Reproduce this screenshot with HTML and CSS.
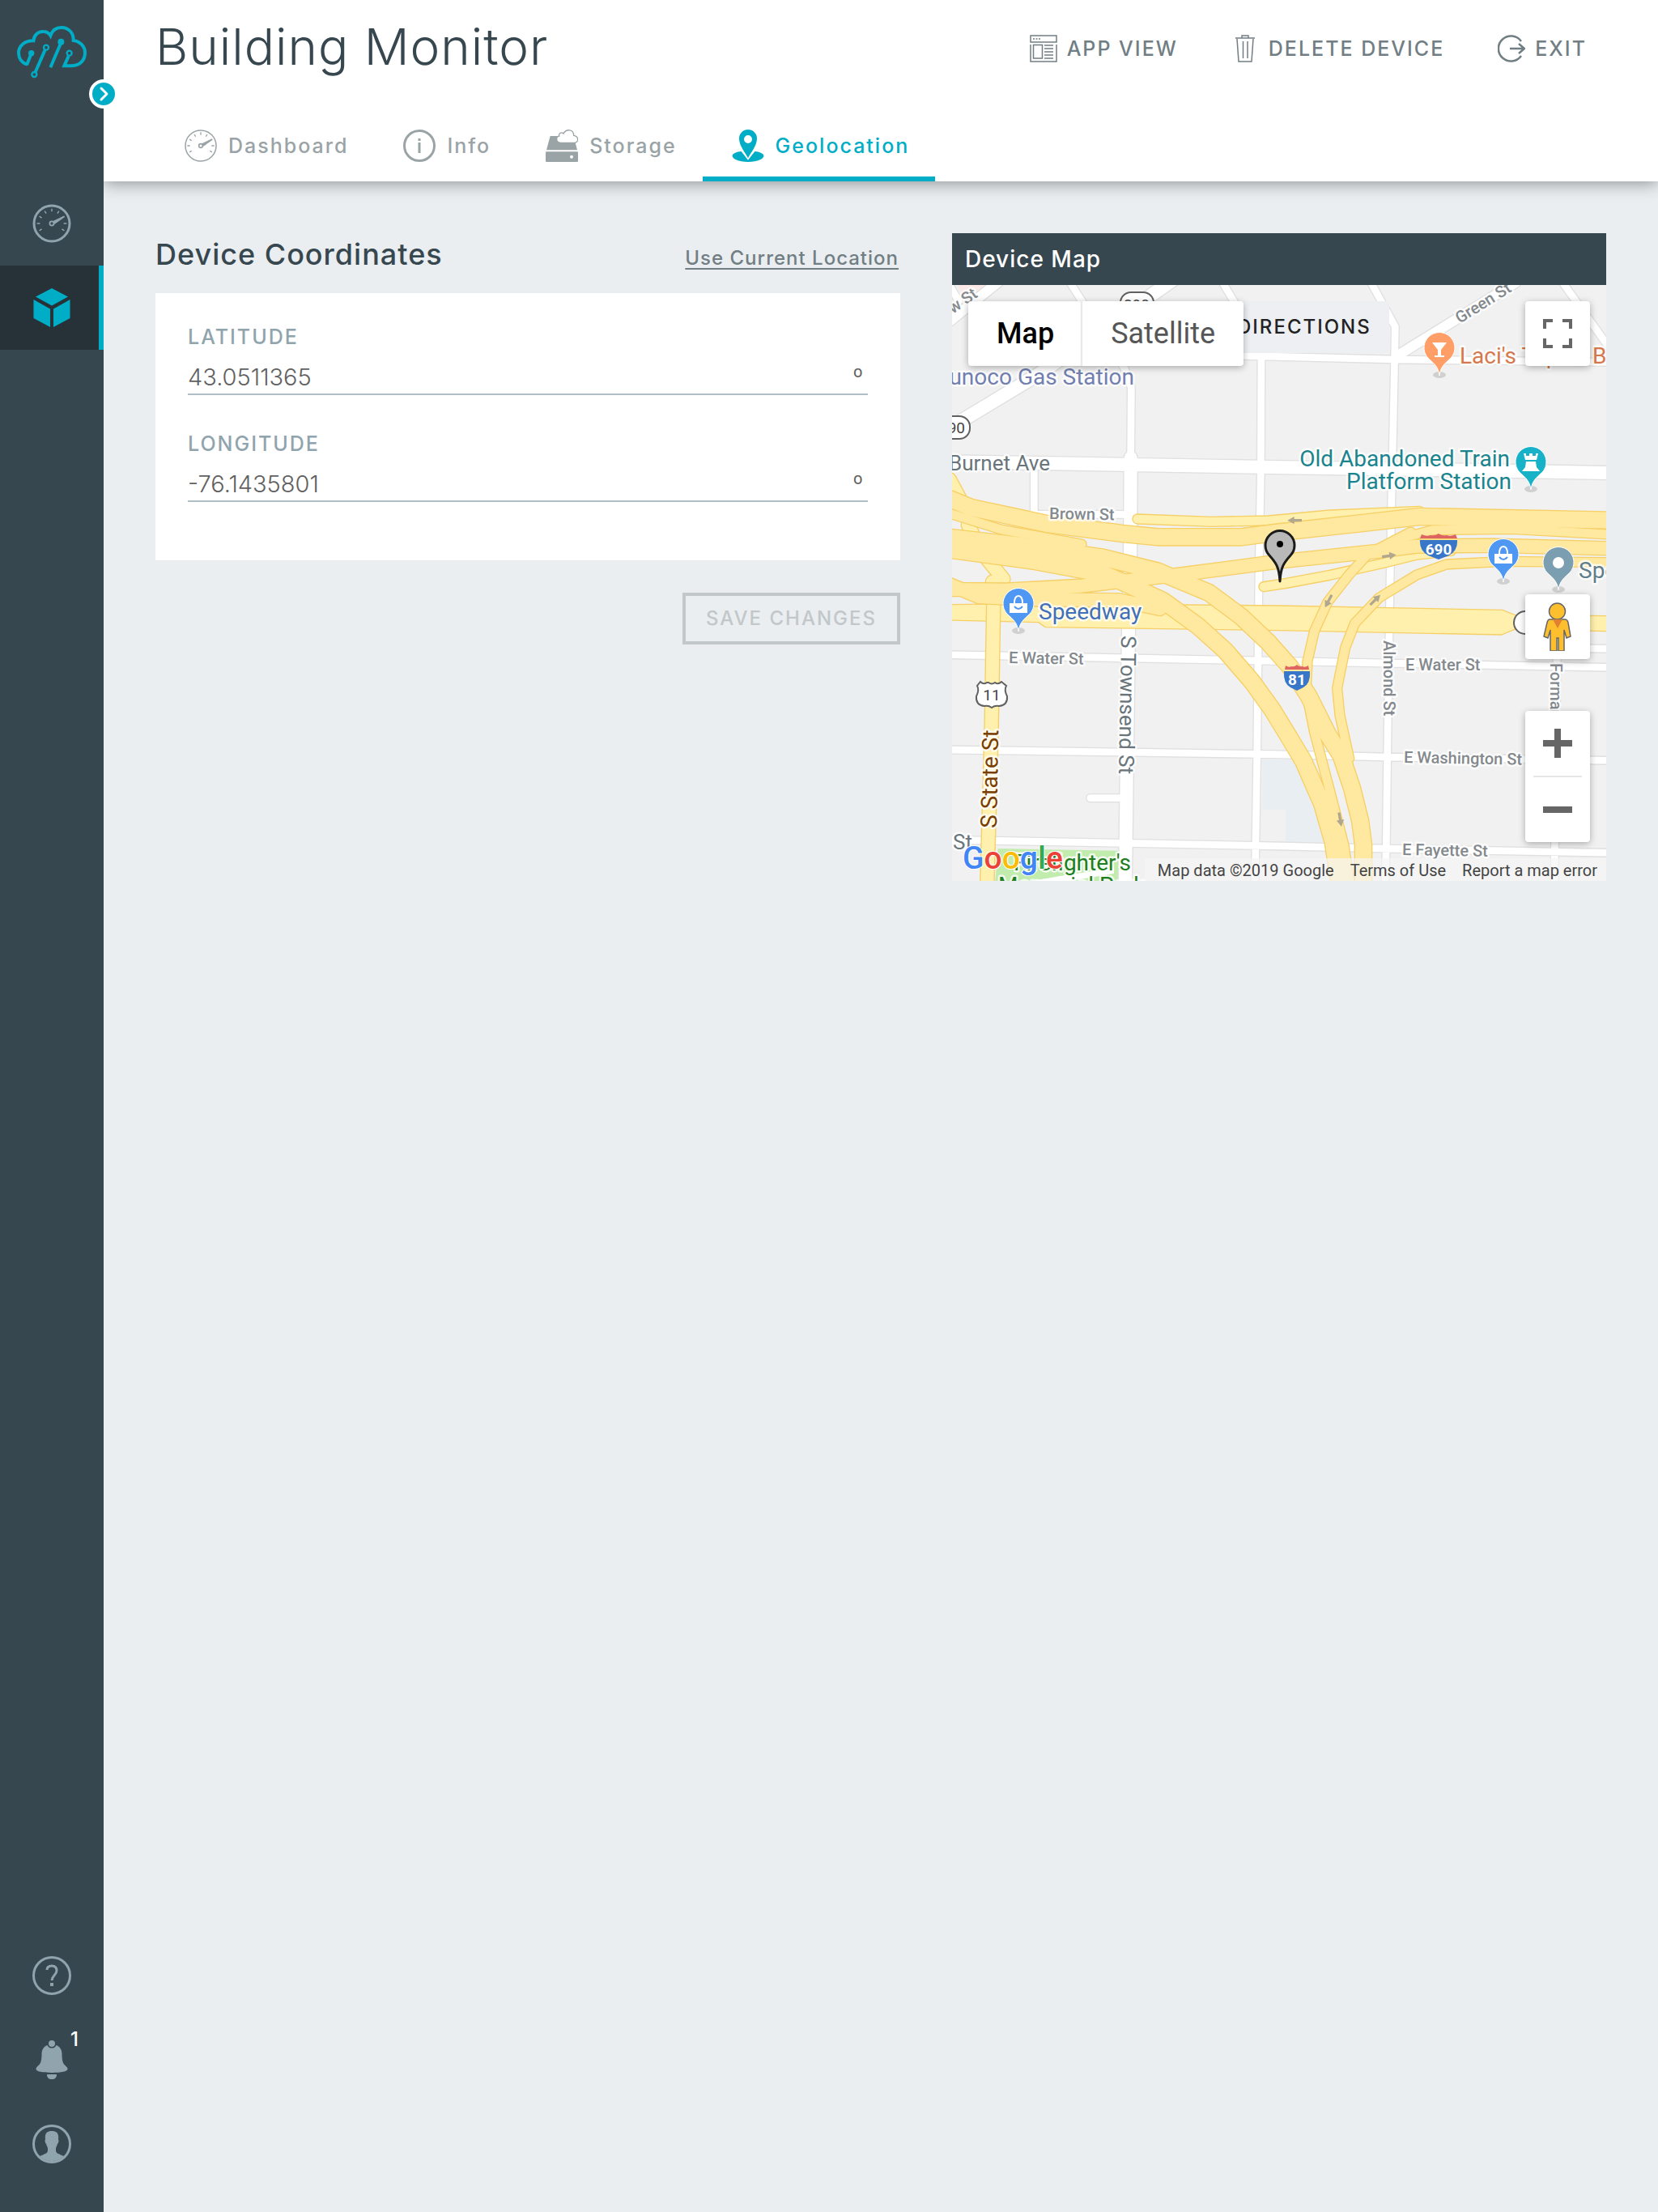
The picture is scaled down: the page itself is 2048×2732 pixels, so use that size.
FILE: index.html
```html
<!DOCTYPE html>
<html lang="en">
<head>
<meta charset="utf-8">
<meta name="viewport" content="width=device-width, initial-scale=1">
<title>Building Monitor</title>
<link rel="stylesheet" href="styles.css">
</head>
<body>
<svg class="defs" aria-hidden="true">
  <symbol id="gauge" viewBox="0 0 120 120">
    <g fill="none" stroke="currentColor">
      <path stroke-width="4" d="M10 60h10M100 60h10M60 10v10M18 36l8 5M102 84l-8-5M18 84l8-5M36 18l5 8M84 18l-5 8"/>
      <circle cx="60" cy="60" r="7" stroke-width="5"/>
    </g>
    <path fill="currentColor" d="M64 52 101 34q4 2 2 5L70 62z"/>
  </symbol>
  <symbol id="pin" viewBox="-22 -22 44 60" overflow="visible">
    <ellipse cx="0" cy="33" rx="8" ry="4" fill="#0002"/>
    <path fill="currentColor" stroke="#fff" stroke-width="1" d="M0 34C-1 26-4 21-11 15A19 19 0 1 1 11 15C4 21 1 26 0 34z"/>
  </symbol>
</svg>

<aside class="sidebar">
  <a class="logo" href="#" aria-label="Home">
    <svg viewBox="60 60 264 204" fill="none" stroke="#00adc6" stroke-width="12">
      <path d="M101 209C80 203 69 185 69 166C69 140 92 120 124 121C126 98 143 86 160 87C172 87 181 92 187 102C194 82 210 72 227 72C255 72 273 92 272 120C298 124 315 142 315 166C315 196 293 214 264 214H238L254 178"/>
      <path d="M99 211 116 169M167 155 131 237M187 220 226 128"/>
      <circle cx="171" cy="146" r="9" stroke-width="7"/><circle cx="127" cy="246" r="9" stroke-width="7"/><circle cx="257" cy="167" r="9" stroke-width="7"/>
      <g fill="#00adc6" stroke="none"><circle cx="116" cy="167" r="11"/><circle cx="226" cy="125" r="12"/></g>
    </svg>
  </a>
  <button class="expand" type="button" aria-label="Expand menu">
    <svg viewBox="0 0 28 28"><path d="M11 7l7 7-7 7" fill="none" stroke="#fff" stroke-width="3" stroke-linecap="round" stroke-linejoin="round"/></svg>
  </button>
  <nav class="nav">
    <a class="nav-item" href="#" aria-label="Dashboards">
      <svg viewBox="0 0 48 48"><circle cx="24" cy="24" r="22" fill="none" stroke="currentColor" stroke-width="3"/><use href="#gauge" x="2" y="2" width="44" height="44"/></svg>
    </a>
    <a class="nav-item active" href="#" aria-label="Devices">
      <svg viewBox="0 0 48 48" fill="currentColor"><path d="M24 0 44 10.500 24 21.500 4 10.500zM1.500 14 22 25.500V48L1.500 37zM46.500 14 26 25.500V48L46.500 37z"/></svg>
    </a>
  </nav>
  <nav class="nav nav-bottom">
    <a class="nav-item" href="#" aria-label="Help">
      <svg viewBox="0 0 48 48" fill="none" stroke="currentColor" stroke-width="3"><circle cx="24" cy="24" r="22.500"/><path d="M18 17c0-3 2-5 6-5s6 2 6 6c0 5-6 6-6 12"/><path d="M22 35h4" stroke-width="4"/></svg>
    </a>
    <a class="nav-item" href="#" aria-label="Notifications, 1 new">
      <svg viewBox="0 0 48 48" fill="currentColor"><circle cx="24" cy="4" r="4"/><path d="M18.500 6a6 6 0 0 0 11 0c5 2 7 6 7 11 0 12 3 13 6 16 4 5-4 7-18.500 7S1.500 38 5.500 33c3-3 6-4 6-16 0-5 2-9 7-11zM18 42h12c0 4-2 6-6 6s-6-2-6-6z"/></svg>
      <span class="badge">1</span>
    </a>
    <a class="nav-item" href="#" aria-label="Account">
      <svg viewBox="0 0 48 48"><circle cx="24" cy="24" r="22.500" fill="none" stroke="currentColor" stroke-width="3"/><path fill="currentColor" d="M24 8c6 0 9 3 8 10 1 2 0 5-1 6-1 3-2 4-2 6 0 5 0 5 10 9a22 22 0 0 1-30 0c10-4 10-4 10-9 0-2-1-3-2-6-1-1-2-4-1-6-1-7 2-10 8-10z"/></svg>
    </a>
  </nav>
</aside>

<div class="page">
  <header class="header">
    <div class="title-row">
      <h1>Building Monitor</h1>
      <div class="actions">
        <button type="button">
          <svg viewBox="0 0 34 34" fill="none" stroke="currentColor" stroke-width="1.500"><path d="M1 1h32v8H1zM1 12v21h32V12M4.500 12.500h11v16.500h-11zM18 13h11M18 17h11M18 21h11M18 25h11M18 29h11"/><path d="M4 5h9" stroke-dasharray="2 1.500"/></svg>
          APP VIEW
        </button>
        <button type="button">
          <svg viewBox="0 0 34 34" fill="none" stroke="currentColor" stroke-width="1.500"><path d="M5 4h24M7 5l2 28h16L27 5M13 4V1h8v3M14.500 8v21M20 8v21"/></svg>
          DELETE DEVICE
        </button>
        <button type="button">
          <svg viewBox="0 0 34 34" fill="none" stroke="currentColor" stroke-width="2.500"><path d="M29 8A15.500 15.500 0 1 0 29 26M15 17h17M26 11l7 6-7 6"/></svg>
          EXIT
        </button>
      </div>
    </div>
    <nav class="tabs">
      <a href="#"><svg viewBox="0 0 40 40"><circle cx="20" cy="20" r="19" fill="none" stroke="currentColor" stroke-width="1.500"/><use href="#gauge" width="40" height="40"/></svg>Dashboard</a>
      <a href="#"><svg viewBox="0 0 40 40" fill="none" stroke="currentColor" stroke-width="3"><circle cx="20" cy="20" r="18.500"/><path d="M20 16v13M20 11v3"/></svg>Info</a>
      <a href="#"><svg viewBox="0 0 120 120"><path fill="currentColor" d="M17 24H60L108 40 117 76H3zM3 82h114q3 0 3 4v30q0 4-4 4H4q-4 0-4-4V86q0-4 3-4z"/><path fill="#fff" stroke="currentColor" stroke-width="4" d="M55 49C36 48 38 24 50 24C48 10 62 10 66 15C76-4 104-2 104 22C122 24 124 46 108 49z"/><circle cx="96" cy="101" r="6" fill="#fff"/></svg>Storage</a>
      <a href="#" class="active" aria-current="page"><svg viewBox="0 0 120 120" fill="currentColor"><path d="M35 81C-22 87 0 120 60 120S142 87 85 81L60 113z"/><path fill-rule="evenodd" d="M60 106C52 88 27 62 27 33a33 33 0 0 1 66 0C93 62 68 88 60 106zM60 21a15 15 0 1 0 0 30 15 15 0 0 0 0-30z"/></svg>Geolocation</a>
    </nav>
  </header>

  <main class="content">
    <form class="coords">
      <div class="section-head">
        <h2>Device Coordinates</h2>
        <a href="#">Use Current Location</a>
      </div>
      <div class="card">
        <div class="field">
          <label for="lat">LATITUDE</label>
          <div class="input"><input id="lat" type="text" value="43.0511365"><span>º</span></div>
        </div>
        <div class="field">
          <label for="lng">LONGITUDE</label>
          <div class="input"><input id="lng" type="text" value="-76.1435801"><span>º</span></div>
        </div>
      </div>
      <button class="save" type="submit" disabled>SAVE CHANGES</button>
    </form>

    <section class="map-panel">
      <h2>Device Map</h2>
      <div class="map">
        <svg class="tiles" viewBox="0 0 808 736" preserveAspectRatio="xMidYMid slice" role="img" aria-label="Street map">
          <defs>
            <g id="streets">
              <path class="w28" d="M900 257 1074 262 1642 276 2434 286M437-10 640 310 664 380 662 640M1002-10 1146 230V264L1144 704 1137 1074 1134 1374 1130 1754 1125 2074 1122 2218M1552-10 1642 154 1640 274 1628 824 1623 1104 1614 1674 1609 2074 1605 2218M2242 1350 2232 2218M304 690V850H660M2262-10 2434 230M-10 0 25 60M-10 1370 1200 1393 2434 1417M2300 1346 2434 1348M-10 1722 1182 1739 1612 1749 2434 1762M-10 2056 1222 2079 1642 2089 2434 2104M512 1901H630"/>
              <path class="w36" d="M1650 262 2090-10M-10 135 170-10"/>
              <path class="w48" d="M-10 655 380 661 1182 675 1642 682 2434 696M662 640 660 1064 654 1274 642 2218M820-20 330 325-10 530"/>
            </g>
            <g id="ramps">
              <path class="w34" d="M1155 1118 1240 1105 1400 1075 1600 1030 1720 1000 1850 985M687 867 962 877 1172 873 1400 852 1732 838"/>
              <path class="w48" d="M-10 720 60 850M60 890 110 990 190 1090M150 1100 154 1170 146 1640 130 2218"/>
            </g>
            <g id="highways">
              <path class="w34" d="M1700 915 1540 998 1470 1075 1392 1174 1342 1284 1317 1394 1312 1504 1342 1654 1392 1844 1452 2074 1474 2218M2434 1028 2050 1024 1832 1035 1722 1074 1582 1159 1492 1254 1457 1344 1427 1494 1437 1594 1472 1754M1640 945 1780 908 2072 904 2434 924M-10 846 182 906 480 960"/>
              <path class="w48" d="M-10 1128 200 1130 480 1115 850 1072 1200 1026 1592 985 1720 968 2000 965 2434 976M-10 1110 100 1155 300 1165 620 1168 770 1200"/>
              <path class="w60" d="M-10 792 72 825 352 885 632 921 762 934 1072 934 1212 916 1522 882 1732 858 1842 860 2434 872M-10 935 250 965 560 1010 760 1060 842 1094 952 1140 1072 1229 1172 1324 1252 1414 1322 1524 1392 1664 1442 1744 1482 1864 1512 1984 1524 2074 1524 2218M-10 980 300 1022 560 1070 662 1114 782 1170 912 1264 1012 1354 1112 1470 1187 1574 1242 1664 1302 1764 1372 1924 1412 2064 1436 2218"/>
            </g>
          </defs>
          <rect x="-800" width="2400" height="736" fill="#f1f1f1"/>
          <g class="roads">
            <path fill="#fbe9e7" d="M20 0H130L50 60z"/>
            <path fill="#e9eef2" d="M1150 1758 1310 1762 1420 2064H1235V1944H1150z"/>
            <path fill="#c1ecae" d="M170 2088 620 2096 615 2208H160z"/>
            <use href="#streets" class="edge"/><use href="#streets" class="street"/>
            <path class="boulevard" d="M-10 1184 300 1180 1212 1188 2040 1204 2084 1222 2434 1226V1283L2084 1276 2036 1296 1212 1280 345 1268 320 1250-10 1242z"/>
            <use href="#ramps" class="hedge"/><use href="#ramps" class="ramp"/>
            <use href="#highways" class="hedge"/><use href="#highways" class="highway"/>
            <path fill="#fff" d="M300 2208 400 2190 600 2160V2180L440 2208z"/>
            <g fill="#b0a78e">
              <path id="arrow" d="M1243 872 1268 858V867H1296V877H1268V886z"/>
              <use href="#arrow" transform="rotate(172 1440 950)"/>
              <use href="#arrow" transform="translate(1390 1180) rotate(-62) translate(-1260-872)"/>
              <use href="#arrow" transform="translate(1575 1160) rotate(135) translate(-1260-872)"/>
              <use href="#arrow" transform="translate(1440 1990) rotate(-100) translate(-1260-872)"/>
            </g>
          </g>

          <g class="shield">
            <rect x="208" y="9" width="41" height="27" rx="13"/><text x="228" y="31">290</text>
            <rect x="-20" y="162" width="42" height="28" rx="13"/><text x="0" y="183">290</text>
            <rect x="694" y="403" width="42" height="28" rx="14"/><text x="714" y="424">5</text>
            <path d="M35 490Q39 494 43 491H45Q49 494 53 491Q57 494 61 490L67 495Q64 500 68 508Q69 519 58 520Q53 519 49 522Q45 519 40 520Q29 519 30 508Q34 500 31 495z"/><text x="49" y="513">11</text>
          </g>
          <g class="interstate">
            <path fill="#de6461" d="M580 308Q586 311 591 309Q597 310 601 307Q605 310 611 309Q616 311 622 308L624 313H578z"/>
            <path fill="#3776c8" d="M578 315H624Q625 328 614 334L601 339 588 334Q577 328 578 315z"/><text x="601" y="333">690</text>
            <path fill="#de6461" d="M412 470Q416 473 419 471Q423 472 426 469Q429 472 433 471Q436 473 440 470L441 475H411z"/>
            <path fill="#3776c8" d="M410 477H442Q443 492 434 497L426 501 418 497Q409 492 410 477z"/><text x="426" y="494">81</text>
          </g>

          <g class="small">
            <text transform="translate(1 36) rotate(-35)">w St</text>
            <text transform="translate(120 289) rotate(1)">Brown St</text>
            <text transform="translate(627 48) rotate(-32)">Green St</text>
            <text transform="translate(70 467) rotate(1)">E Water St</text>
            <text x="560" y="476">E Water St</text>
            <text transform="translate(558 590) rotate(1)">E Washington St</text>
            <text transform="translate(556 704) rotate(1)">E Fayette St</text>
            <text transform="translate(533 439) rotate(90)">Almond St</text>
            <text transform="translate(739 467) rotate(90)">Forman Ave</text>
          </g>
          <g class="medium">
            <text x="121" y="229" text-anchor="end">Burnet Ave</text>
            <text transform="translate(209 433) rotate(91)">S Townsend St</text>
            <text x="1" y="697">St</text>
            <text class="brown" transform="translate(55 671) rotate(-89)">S State St</text>
          </g>
          <g class="poi">
            <text x="225" y="123" text-anchor="end" fill="#727fb0">Sunoco Gas Station</text>
            <text x="627" y="97" fill="#d6784b">Laci's Tapas <tspan x="791">Bar</tspan></text>
            <text x="689" y="224" text-anchor="end" fill="#1a848e">Old Abandoned Train</text>
            <text x="691" y="252" text-anchor="end" fill="#1a848e">Platform Station</text>
            <text x="107" y="413" fill="#3f70b8">Speedway</text>
            <text x="774" y="362" fill="#607d8b">Spe</text>
            <text x="221" y="723" text-anchor="end" fill="#1e7d1e">Firefighter's</text>
            <text x="57" y="751" fill="#1e7d1e">Memorial Park</text>
          </g>

          <g fill="#fff">
            <use href="#pin" x="580" y="56" width="44" height="60" color="#ff9e67"/>
            <path d="M593 71H611L604 80V87H608V89H596V87H600V80z"/>
            <use href="#pin" x="693" y="197" width="44" height="60" color="#17b2c8"/>
            <path d="M706 208H709V211H713V208H717V211H721V208H724L722 216H708zM709 218H721L722 225 726 230H704L708 225z"/>
            <use href="#pin" x="659" y="311" width="44" height="60" color="#4e97f3"/>
            <g id="bag"><path d="M670 332H692V344H670z"/><path d="M676 332Q676 323 681 323T686 332" fill="none" stroke="#fff" stroke-width="2"/><path d="M676 336Q681 342 686 336" fill="none" stroke="#4e97f3" stroke-width="2"/></g>
            <use href="#pin" x="727" y="321" width="44" height="60" color="#7b9eb0"/>
            <circle cx="749" cy="343" r="7"/>
            <use href="#pin" x="60" y="372" width="44" height="60" color="#4e97f3"/>
            <use href="#bag" x="-599" y="61"/>
          </g>
          <path fill="#b9b9b9" stroke="#1b1b1b" stroke-width="3" stroke-linejoin="round" d="M405 366C404 348 400 343 392 334A18 18 0 1 1 418 334C410 343 406 348 405 366z"/>
          <circle cx="405" cy="320" r="4"/>
          <text class="google" x="13" y="721"><tspan fill="#4285f4">G</tspan><tspan fill="#ea4335">o</tspan><tspan fill="#fbbc05">o</tspan><tspan fill="#4285f4">g</tspan><tspan fill="#34a853">l</tspan><tspan fill="#ea4335">e</tspan></text>
        </svg>

        <button class="directions" type="button">DIRECTIONS</button>
        <div class="map-types">
          <button type="button" class="selected">Map</button>
          <button type="button">Satellite</button>
        </div>
        <button class="control fullscreen" type="button" aria-label="Toggle fullscreen"><svg viewBox="0 0 36 36"><path d="M2 12V2H12M24 2H34V12M34 24V34H24M12 34H2V24" fill="none" stroke="#666" stroke-width="4"/></svg></button>
        <div class="lower-controls">
          <button class="control" type="button" aria-label="Street View"><svg class="pegman" viewBox="0 0 36 60" fill="#fdbf2d" stroke="#666" stroke-width="1.500"><path d="M8 21H27Q30 21 31 25L34 42 29 44 26 34V60H19V44H17V60H9V34L6 44 1 42 5 25Q6 21 8 21z"/><circle cx="17.500" cy="11" r="10"/><path fill="#e08030" stroke="none" d="M12 21H24L18 32z"/></svg></button>
          <div class="zoom">
            <button type="button" aria-label="Zoom in"><svg viewBox="0 0 36 36"><path d="M18 0V36M0 18H36" stroke="#666" stroke-width="8"/></svg></button>
            <hr>
            <button type="button" aria-label="Zoom out"><svg viewBox="0 0 36 36"><path d="M0 18H36" stroke="#666" stroke-width="8"/></svg></button>
          </div>
        </div>
        <div class="credits"><span>Map data ©2019 Google</span><a href="#">Terms of Use</a><a href="#">Report a map error</a></div>
      </div>
    </section>
  </main>
</div>
</body>
</html>
```
FILE: styles.css
```css
* { box-sizing: border-box; }

body {
  margin: 0;
  min-height: 100vh;
  display: grid;
  grid-template-columns: 128px minmax(0, 1fr);
  background: #eaeef1;
  color: #37474f;
  font: 24px/32px Inter, "Liberation Sans", sans-serif;
}

h1, h2 { margin: 0; }
svg { display: block; flex: none; }
a { color: inherit; text-decoration: none; }
button { margin: 0; padding: 0; border: 0; background: none; color: inherit; font: inherit; }
.defs { position: absolute; width: 0; height: 0; }

/* Sidebar */
.sidebar {
  position: relative;
  z-index: 2;
  display: flex;
  flex-direction: column;
  padding: 30px 0 32px;
  background: #37474f;
  color: #90a4ae;
}
.logo { align-self: center; height: 68px; margin-bottom: 126px; }
.logo svg { width: 88px; height: 68px; }
.expand {
  position: absolute;
  top: 98px;
  right: -18px;
  width: 36px;
  height: 36px;
  border: 4px solid #fff;
  border-radius: 50%;
  background: #00adc6;
}
.expand svg { width: 28px; height: 28px; }
.nav-item {
  position: relative;
  display: flex;
  align-items: center;
  justify-content: center;
  height: 104px;
}
.nav-item svg { width: 48px; height: 48px; }
.nav-item.active { background: #263238; color: #00adc6; box-shadow: inset -6px 0 #00adc6; }
.nav-bottom { margin-top: auto; }
.badge { position: absolute; top: 11px; left: 87px; color: #fff; font-weight: 500; }

/* Header */
.header {
  position: relative;
  padding: 24px 64px 0;
  background: #fff;
  box-shadow: 0 2px 20px rgba(0, 0, 0, .4);
}
.title-row { display: flex; justify-content: space-between; align-items: center; height: 72px; margin-bottom: 40px; }
h1 { font-size: 62px; line-height: 68px; font-weight: 300; letter-spacing: 1px; margin-bottom: 4px; }
.actions { display: flex; gap: 66px; padding-right: 24px; color: #717e84; }
.actions button { display: flex; align-items: center; gap: 12px; font-size: 25px; font-weight: 500; letter-spacing: 2px; }
.actions svg { width: 34px; height: 34px; }
.tabs { display: flex; color: #9aa3a6; }
.tabs a {
  display: flex;
  align-items: center;
  gap: 14px;
  height: 88px;
  padding: 0 32px 0 36px;
  border: solid transparent;
  border-width: 6px 0;
  font-size: 25px;
  font-weight: 500;
  letter-spacing: 2px;
}
.tabs svg { width: 40px; height: 40px; }
.tabs .active { color: #00adc6; border-bottom-color: #00adc6; }

/* Content */
.content {
  display: grid;
  grid-template-columns: minmax(0, 115fr) minmax(0, 101fr);
  gap: 64px;
  align-items: start;
  padding: 64px;
}
.section-head { display: flex; justify-content: space-between; align-items: baseline; height: 52px; margin-bottom: 22px; }
.section-head h2 { font-size: 36px; line-height: 52px; font-weight: 500; letter-spacing: 1px; }
.section-head a { padding-right: 2px; color: #717e84; font-weight: 500; text-decoration: underline; text-decoration-thickness: 2px; text-underline-offset: 4px; letter-spacing: 1px; }
.card { display: flex; flex-direction: column; gap: 48px; padding: 42px 40px 72px; background: #fff; }
.field label { display: block; margin-bottom: 18px; color: #90a4ae; font-size: 25px; line-height: 24px; font-weight: 500; letter-spacing: 2px; }
.input { display: flex; padding-right: 6px; border-bottom: 2px solid #b0bec5; color: #616161; font-size: 29px; font-weight: 300; line-height: 40px; }
.input input { flex: 1; min-width: 0; height: 40px; padding: 0; border: 0; background: none; color: inherit; font: inherit; outline: 0; }
.save {
  display: block;
  height: 64px;
  margin: 40px 0 0 auto;
  padding: 0 25px;
  border: 4px solid #c2c7c9;
  color: #c2c7c9;
  font-weight: 500;
  letter-spacing: 2px;
}

/* Map */
.map-panel h2 { padding: 0 16px; background: #37474f; color: #fff; font-size: 28px; line-height: 64px; font-weight: 500; letter-spacing: 1px; }
.map { position: relative; height: 736px; overflow: hidden; font-family: Roboto, "Liberation Sans", sans-serif; }
.tiles { width: 100%; height: 100%; }
.roads { transform: scale(.33333); fill: none; }
.roads use { stroke-linejoin: round; stroke-linecap: round; }
.edge { stroke: #e0e0e0; --extra: 8px; }
.street { stroke: #fff; --extra: 0px; }
.hedge { stroke: #f6cf65; --extra: 8px; }
.ramp { stroke: #fff0ae; --extra: 0px; }
.highway { stroke: #ffe9a0; --extra: 0px; }
.boulevard { fill: #fff0ae; stroke: #f6cf65; stroke-width: 4px; }
.w28 { stroke-width: calc(26px + var(--extra)); }
.w34 { stroke-width: calc(32px + var(--extra)); }
.w36 { stroke-width: calc(36px + var(--extra)); }
.w48 { stroke-width: calc(48px + var(--extra)); }
.w60 { stroke-width: calc(60px + var(--extra)); }
.small, .medium, .poi { paint-order: stroke; stroke: #fffc; stroke-width: 5px; stroke-linejoin: round; }
.small { font-size: 20px; font-weight: 500; fill: #83898d; }
.medium { font-size: 26px; fill: #69757b; }
.brown { fill: #7a3f00; font-size: 28px; }
.poi { font-size: 28px; }
.shield { fill: #fff; stroke: #616161; stroke-width: 2px; }
.shield text { fill: #444; stroke: none; font-size: 19px; text-anchor: middle; }
.interstate { stroke: none; }
.interstate text { fill: #fff; font-size: 19px; font-weight: 700; text-anchor: middle; }
.google { font-size: 39px; font-weight: 500; paint-order: stroke; stroke: #fff; stroke-width: 2px; }

.directions {
  position: absolute;
  top: 20px;
  left: 330px;
  height: 64px;
  padding: 0 22px;
  background: #edeff2;
  color: #222;
  font: 500 24px/64px Inter, "Liberation Sans", sans-serif;
  letter-spacing: 2px;
}
.map-types {
  position: absolute;
  top: 20px;
  left: 20px;
  display: flex;
  border-radius: 4px;
  background: #fff;
  box-shadow: 0 2px 8px rgba(0, 0, 0, .3);
}
.map-types button { height: 80px; padding: 0 35px; color: #565656; font-size: 36px; }
.map-types .selected { color: #000; font-weight: 500; box-shadow: inset -2px 0 2px #e6e6e6; }
.control, .zoom { border-radius: 4px; background: #fff; box-shadow: 0 2px 8px rgba(0, 0, 0, .3); }
.control, .zoom button { display: flex; align-items: center; justify-content: center; width: 80px; height: 80px; }
.control svg, .zoom svg { width: 36px; height: 36px; }
.control .pegman { width: 36px; height: 60px; }
.fullscreen { position: absolute; top: 20px; right: 20px; }
.lower-controls { position: absolute; right: 20px; bottom: 48px; display: grid; gap: 64px; }
.zoom hr { width: 60px; height: 2px; margin: 0 auto; border: 0; background: #e6e6e6; }
.credits {
  position: absolute;
  right: 0;
  bottom: 0;
  display: flex;
  gap: 20px;
  height: 28px;
  padding: 0 11px 0 16px;
  background: rgba(245, 245, 245, .7);
  color: #444;
  font-size: 20px;
  line-height: 30px;
}
```
